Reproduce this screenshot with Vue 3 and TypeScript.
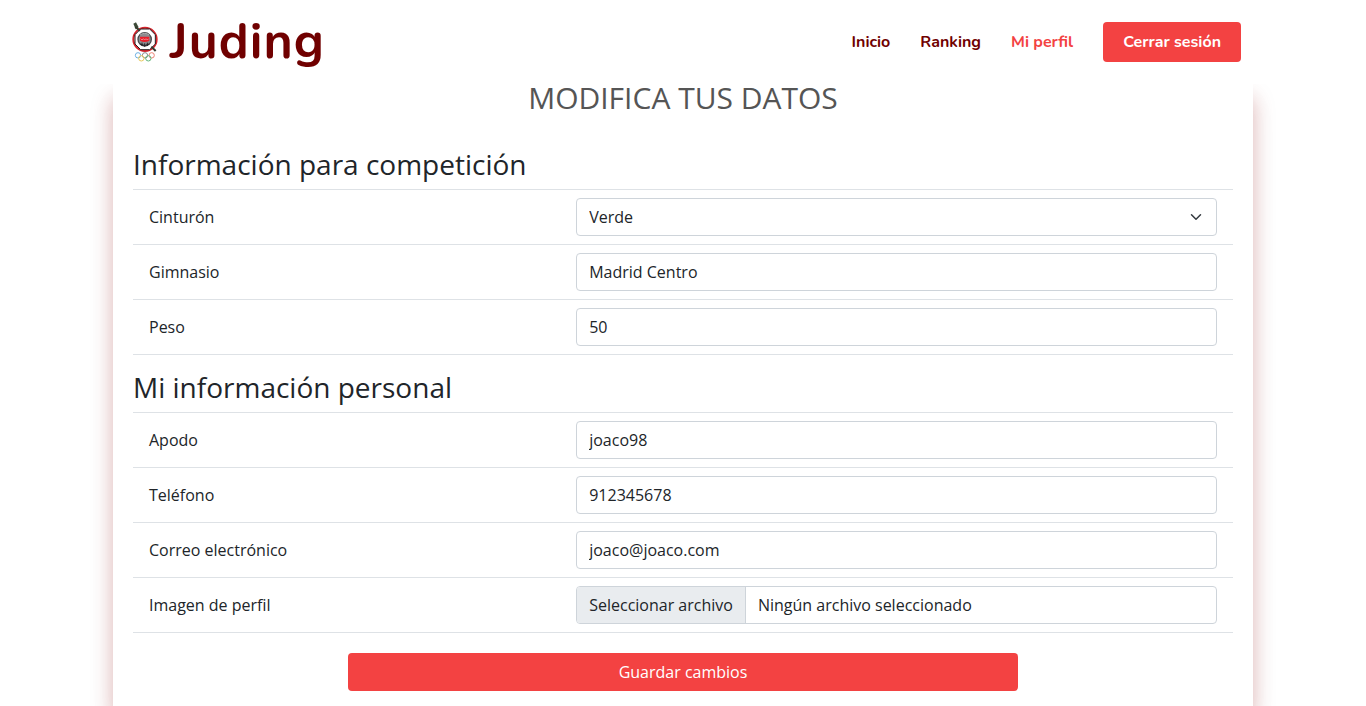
<script setup lang="ts">
import { reactive, ref } from 'vue'

interface Field {
  id: 'apodo' | 'telefono' | 'correo'
  label: string
  type: string
}

const belts: string[] = ['Blanco', 'Amarillo', 'Naranja', 'Verde', 'Azul', 'Marrón', 'Negro']

const form = reactive({
  cinturon: 'Verde',
  gimnasio: 'Madrid Centro',
  peso: '50',
  apodo: 'joaco98',
  telefono: '912345678',
  correo: 'joaco@joaco.com',
})

const personalFields: Field[] = [
  { id: 'apodo', label: 'Apodo', type: 'text' },
  { id: 'telefono', label: 'Teléfono', type: 'tel' },
  { id: 'correo', label: 'Correo electrónico', type: 'email' },
]

const fileName = ref('Ningún archivo seleccionado')

function onFile(event: Event): void {
  const file = (event.target as HTMLInputElement).files?.[0]
  fileName.value = file ? file.name : 'Ningún archivo seleccionado'
}
</script>

<template>
  <div class="page">
    <header class="header">
      <div class="bar">
        <a class="logo" href="#">
          <svg class="emblem" viewBox="36 26 78 120" aria-hidden="true">
            <path d="M40 31l8-4 8 15-9 6z" fill="#3d4a38" />
            <circle cx="75" cy="78" r="35" fill="#fff" stroke="#d3232b" stroke-width="6" />
            <path d="M62 47h27l17 17v28l-17 17H62L45 92V64z" fill="#fff" stroke="#241a1c" stroke-width="3" />
            <path d="M46 40l14 12M94 100l13 13" stroke="#343c30" stroke-width="6" />
            <circle cx="74" cy="78" r="20" fill="#8c8c90" stroke="#4a494c" stroke-width="4" />
            <path d="M60 65q14-10 28 0" fill="none" stroke="#aaa" stroke-width="3" />
            <path d="M60 70h28v12q-14 8-28 0z" fill="#e8202c" />
            <path d="M62 76l4 4 4-4 4 4 4-4 4 4 4-4" fill="none" stroke="#f8b4b6" stroke-width="2" />
            <path d="M60 92q14 9 28 0M66 88v10M74 90v10M82 88v10" fill="none" stroke="#242326" stroke-width="3" />
            <g fill="none" stroke-width="3">
              <circle cx="54" cy="126" r="8" stroke="#6fb1e2" />
              <circle cx="75" cy="126" r="8" stroke="#8a8a8a" />
              <circle cx="95" cy="126" r="8" stroke="#ee8273" />
              <circle cx="64" cy="135" r="8" stroke="#e8c95c" />
              <circle cx="85" cy="135" r="8" stroke="#63b77c" />
            </g>
          </svg>
          <span class="brand">Juding</span>
        </a>
        <nav class="nav">
          <a class="link" href="#">Inicio</a>
          <a class="link" href="#">Ranking</a>
          <a class="link active" href="#">Mi perfil</a>
          <button class="logout" type="button">Cerrar sesión</button>
        </nav>
      </div>
    </header>

    <main class="panel">
      <h1 class="title">MODIFICA TUS DATOS</h1>
      <form @submit.prevent>
        <h2 class="section">Información para competición</h2>
        <div class="rows">
          <div class="row">
            <label for="cinturon">Cinturón</label>
            <div class="select-wrap">
              <select id="cinturon" v-model="form.cinturon" class="control">
                <option v-for="belt in belts" :key="belt">{{ belt }}</option>
              </select>
              <svg class="chevron" viewBox="0 0 16 16" aria-hidden="true">
                <path d="M2 5l6 6 6-6" fill="none" stroke="#343a40" stroke-width="2" stroke-linecap="round" stroke-linejoin="round" />
              </svg>
            </div>
          </div>
          <div class="row">
            <label for="gimnasio">Gimnasio</label>
            <input id="gimnasio" v-model="form.gimnasio" class="control" type="text" />
          </div>
          <div class="row">
            <label for="peso">Peso</label>
            <input id="peso" v-model="form.peso" class="control" type="text" inputmode="numeric" />
          </div>
        </div>

        <h2 class="section">Mi información personal</h2>
        <div class="rows">
          <div v-for="field in personalFields" :key="field.id" class="row">
            <label :for="field.id">{{ field.label }}</label>
            <input :id="field.id" v-model="form[field.id]" class="control" :type="field.type" />
          </div>
          <div class="row">
            <label for="imagen">Imagen de perfil</label>
            <div class="file">
              <span class="file-button">Seleccionar archivo</span>
              <span class="file-name">{{ fileName }}</span>
              <input id="imagen" class="file-input" type="file" accept="image/*" @change="onFile" />
            </div>
          </div>
        </div>

        <button class="save" type="submit">Guardar cambios</button>
      </form>
    </main>
  </div>
</template>

<style>
body {
  margin: 0;
  background: #fff;
}
</style>

<style scoped>
.page,
.page * {
  box-sizing: border-box;
}

.page {
  display: flex;
  flex-direction: column;
  min-height: 100vh;
  overflow: hidden;
  color: #212529;
  font-family: 'Open Sans', 'Noto Sans', sans-serif;
  font-size: 16px;
  line-height: 24px;
}

.header {
  position: relative;
  z-index: 1;
  background: #fff;
}

.bar {
  display: flex;
  align-items: center;
  justify-content: space-between;
  max-width: 1140px;
  height: 84px;
  margin: 0 auto;
  padding: 0 12px 0 19px;
}

.logo {
  display: flex;
  align-items: center;
  gap: 12px;
  color: #700000;
  text-decoration: none;
}

.emblem {
  width: 26px;
  height: 40px;
}

.brand {
  font-family: Nunito, Lato, sans-serif;
  font-size: 50px;
  font-weight: 700;
  line-height: 56px;
  letter-spacing: 1px;
}

.nav {
  display: flex;
  align-items: center;
  gap: 30px;
  font-family: Nunito, Lato, sans-serif;
  font-weight: 700;
}

.link {
  color: #700000;
  text-decoration: none;
}

.link.active {
  color: #f34242;
}

.logout {
  height: 40px;
  padding: 0 20px;
  border: 0;
  border-radius: 4px;
  background: #f34242;
  color: #fff;
  font: inherit;
}

.panel {
  flex: 1;
  width: 100%;
  max-width: 1140px;
  margin: 0 auto;
  padding: 0 20px 15px;
  background: #fff;
  box-shadow: 0 14px 20px rgba(150, 0, 0, 0.28), 0 16px 32px rgba(0, 0, 0, 0.03);
}

.title {
  margin: 0;
  color: #555;
  font-size: 30px;
  font-weight: 400;
  line-height: 28px;
  text-align: center;
}

.section {
  margin: 15px 0 8px;
  font-size: 28px;
  font-weight: 400;
  line-height: 34px;
}

.title + form .section:first-child {
  margin-top: 35px;
}

.rows {
  border-top: 1px solid #dee2e6;
}

.row {
  display: grid;
  grid-template-columns: 2fr 3fr;
  align-items: center;
  padding: 8px 16px;
  border-bottom: 1px solid #dee2e6;
}

.control {
  display: block;
  width: 100%;
  height: 38px;
  padding: 6px 12px;
  border: 1px solid #ced4da;
  border-radius: 4px;
  background: #fff;
  color: #212529;
  font: inherit;
  appearance: none;
}

.select-wrap {
  position: relative;
}

.chevron {
  position: absolute;
  top: 13px;
  right: 15px;
  width: 12px;
  height: 12px;
  pointer-events: none;
}

.file {
  position: relative;
  display: flex;
  height: 38px;
  overflow: hidden;
  border: 1px solid #ced4da;
  border-radius: 4px;
}

.file-button {
  padding: 6px 12px;
  border-right: 1px solid #ced4da;
  background: #e9ecef;
}

.file-name {
  padding: 6px 12px;
}

.file-input {
  position: absolute;
  inset: 0;
  width: 100%;
  opacity: 0;
}

.save {
  display: block;
  width: 100%;
  max-width: 670px;
  height: 38px;
  margin: 20px auto 0;
  border: 0;
  border-radius: 4px;
  background: #f34242;
  color: #fff;
  font: inherit;
}
</style>
